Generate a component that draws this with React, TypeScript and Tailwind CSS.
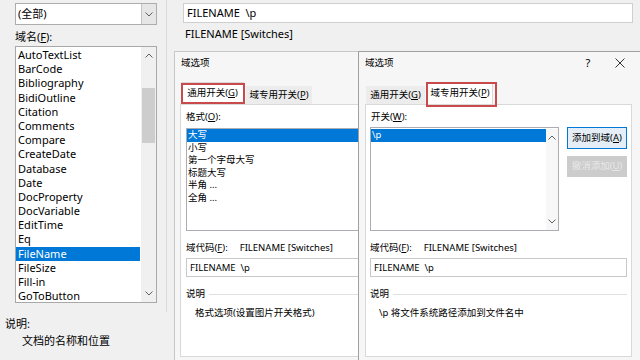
import React from "react";

const ChevUp = () => (
  <svg width="8" height="5" viewBox="0 0 8 5">
    <polyline points="0.5,4.5 4,1 7.5,4.5" fill="none" stroke="#606060" strokeWidth="1" />
  </svg>
);
const ChevDown = () => (
  <svg width="8" height="5" viewBox="0 0 8 5">
    <polyline points="0.5,0.5 4,4 7.5,0.5" fill="none" stroke="#606060" strokeWidth="1" />
  </svg>
);

const fields = [
  "AutoTextList",
  "BarCode",
  "Bibliography",
  "BidiOutline",
  "Citation",
  "Comments",
  "Compare",
  "CreateDate",
  "Database",
  "Date",
  "DocProperty",
  "DocVariable",
  "EditTime",
  "Eq",
  "FileName",
  "FileSize",
  "Fill-in",
  "GoToButton",
];

const formats = ["大写", "小写", "第一个字母大写", "标题大写", "半角 ...", "全角 ..."];

function FieldCode({ boxW, desc }: { boxW: string; desc: string }) {
  return (
    <>
      <div className="mt-[11px] leading-[12px] whitespace-nowrap">
        域代码(<span className="underline">F</span>):<span className="ml-[12px]">FILENAME [Switches]</span>
      </div>
      <div className={`mt-[4px] h-[19px] border border-[#c8c8c8] bg-white pl-[3px] leading-[17px] whitespace-nowrap ${boxW}`}>
        FILENAME&nbsp;&nbsp;\p
      </div>
      <div className={`mt-[11px] flex items-center gap-[4px] leading-[12px] ${boxW}`}>
        <span>说明</span>
        <div className="h-px flex-1 bg-[#e0e0e0]" />
      </div>
      <div className="mt-[7px] ml-[9px] leading-[12px] whitespace-nowrap">{desc}</div>
    </>
  );
}

export default function App() {
  return (
    <div className="w-[640px] h-[360px] overflow-hidden bg-[#f0f0f0] flex text-black font-['Noto_Sans','Noto_Sans_CJK_SC',sans-serif]">
      {/* Left column */}
      <div className="w-[174px] shrink-0 flex flex-col text-[11px]">
        <div className="h-[312px] w-[167px] border-r border-[#dadada] flex flex-col">
          <div className="mt-[3px] ml-[15px] w-[142px] h-[22px] border border-[#adadad] bg-white flex">
            <div className="flex-1 pl-[2px] leading-[20px]">(全部)</div>
            <div className="w-[15px] bg-[#e6e6e6] border-l border-[#c4c4c4] flex items-center justify-center">
              <ChevDown />
            </div>
          </div>
          <div className="mt-[5px] ml-[15px] leading-[13px]">
            域名(<span className="underline">F</span>):
          </div>
          <div className="mt-[3px] ml-[15px] w-[142px] h-[257px] border border-[#a8a8a8] bg-white flex">
            <div className="flex-1 pt-[1px]">
              {fields.map((f) => (
                <div
                  key={f}
                  className={
                    f === "FileName"
                      ? "h-[14.2px] leading-[14.2px] pl-[2px] bg-[#0078d7] text-white"
                      : "h-[14.2px] leading-[14.2px] pl-[2px]"
                  }
                >
                  {f}
                </div>
              ))}
            </div>
            <div className="w-[15px] ml-[1px] bg-[#f0f0f0] flex flex-col">
              <div className="h-[17px] flex items-center justify-center">
                <ChevUp />
              </div>
              <div className="flex-1">
                <div className="mt-[24px] h-[55px] mx-[1px] bg-[#cdcdcd]" />
              </div>
              <div className="h-[17px] flex items-center justify-center">
                <ChevDown />
              </div>
            </div>
          </div>
        </div>
        <div className="mt-[5px] ml-[5px] leading-[14px]">说明:</div>
        <div className="mt-[3px] ml-[22px] leading-[14px]">文档的名称和位置</div>
      </div>

      {/* Right column */}
      <div className="flex-1 flex flex-col min-w-0">
        <div className="mt-[3px] ml-[9px] w-[450px] h-[20px] border border-[#cfcfcf] bg-white pl-[3px] text-[11px] leading-[18px]">
          FILENAME&nbsp;&nbsp;\p
        </div>
        <div className="mt-[4px] ml-[11px] text-[11px] leading-[14px]">FILENAME [Switches]</div>
        <div className="mt-[10px] flex-1 flex text-[9.5px]">
          {/* Dialog 1 */}
          <div className="w-[184px] shrink-0 overflow-hidden bg-[#f6f6f6] border-l border-t border-[#c8c8c8] flex flex-col">
            <div className="h-[30px] pt-[5px] pl-[6px] leading-[12px]">域选项</div>
            <div className="ml-[6px] h-[22px] flex items-end">
              <div className="relative h-[22px] w-[63px] bg-white border border-b-0 border-[#d9d9d9] flex items-center justify-center">
                通用开关(<span className="underline">G</span>)
                <div className="absolute top-0 bottom-0 left-[-1px] right-[-2px] border-2 border-[#c94a4a]" />
              </div>
              <div className="h-[18px] w-[66px] ml-[2px] bg-[#ececec] flex items-center justify-center pt-[1px]">
                域专用开关(<span className="underline">P</span>)
              </div>
            </div>
            <div className="ml-[5px] w-[260px] h-[253px] bg-white border border-[#d9d9d9] pl-[5px]">
              <div className="pt-[6px] leading-[12px]">
                格式(<span className="underline">O</span>):
              </div>
              <div className="mt-[5px] h-[103px] w-[240px] border border-[#abadb3] bg-white">
                {formats.map((f, i) => (
                  <div
                    key={f}
                    className={
                      i === 0
                        ? "h-[12.6px] leading-[12.6px] pl-[1px] bg-[#0078d7] text-white"
                        : "h-[12.6px] leading-[12.6px] pl-[1px]"
                    }
                  >
                    {f}
                  </div>
                ))}
              </div>
              <FieldCode boxW="w-[240px]" desc="格式选项(设置图片开关格式)" />
            </div>
          </div>

          {/* Dialog 2 */}
          <div className="w-[282px] shrink-0 bg-[#f6f6f6] border-l border-t border-[#a0a0a0] flex flex-col">
            <div className="h-[30px] pt-[5px] pl-[6px] flex leading-[12px]">
              <span>域选项</span>
              <span className="ml-auto w-[12px] text-center text-[11px]">?</span>
              <span className="ml-[19px] mr-[13px] w-[14px] h-[12px] flex items-center justify-center">
                <svg width="10" height="10" viewBox="0 0 10 10">
                  <path d="M0.5 0.5 L9.5 9.5 M9.5 0.5 L0.5 9.5" stroke="#333" strokeWidth="1" />
                </svg>
              </span>
            </div>
            <div className="ml-[7px] h-[22px] flex items-end">
              <div className="h-[18px] w-[59px] bg-[#ececec] flex items-center justify-center pt-[1px]">
                通用开关(<span className="underline">G</span>)
              </div>
              <div className="relative ml-[2px] h-[22px] w-[66px] bg-white border border-b-0 border-[#d9d9d9] flex items-center justify-center">
                域专用开关(<span className="underline">P</span>)
                <div className="absolute top-[-1px] bottom-[-3px] left-[-2px] right-[-5px] border-2 border-[#c94a4a]" />
              </div>
            </div>
            <div className="ml-[6px] w-[267px] h-[253px] bg-white border border-[#d9d9d9] pl-[4px]">
              <div className="pt-[6px] pl-[1px] leading-[12px]">
                开关(<span className="underline">W</span>):
              </div>
              <div className="mt-[4px] flex">
                <div className="h-[104px] w-[189px] border border-[#abadb3] bg-white flex pt-[1px]">
                  <div className="flex-1">
                    <div className="h-[12.6px] leading-[12.6px] pl-[1px] bg-[#0078d7] text-white">\p</div>
                  </div>
                  <div className="w-[12px] bg-[#f7f7f7] flex flex-col items-center justify-between pt-[6px] pb-[6px]">
                    <ChevUp />
                    <ChevDown />
                  </div>
                </div>
                <div className="ml-[8px] flex flex-col">
                  <div className="h-[22px] w-[60px] border border-[#0078d7] bg-[#e5eef7] flex items-center justify-center">
                    添加到域(<span className="underline">A</span>)
                  </div>
                  <div className="mt-[7px] h-[21px] w-[60px] bg-[#cccccc] text-[#e8e8e8] flex items-center justify-center">
                    撤消添加(<span className="underline">U</span>)
                  </div>
                </div>
              </div>
              <FieldCode boxW="w-[257px]" desc="\p 将文件系统路径添加到文件名中" />
            </div>
          </div>
        </div>
      </div>
    </div>
  );
}
